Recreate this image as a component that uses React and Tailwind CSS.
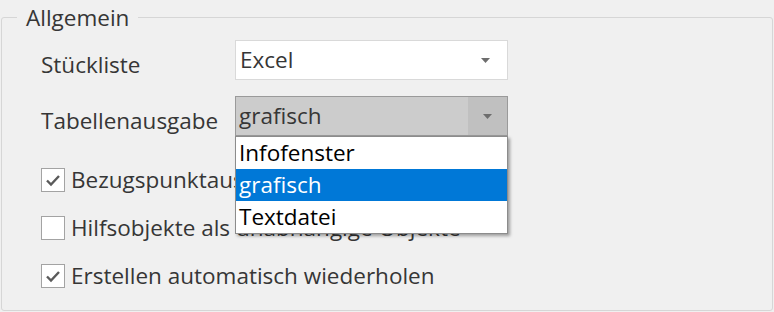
import { useState } from "react";

const font = { fontFamily: '"Open Sans", "Noto Sans", "Liberation Sans", sans-serif' };

function Arrow() {
  return (
    <svg width="9" height="5" viewBox="0 0 9 5" className="shrink-0">
      <path d="M0 0 L9 0 L4.5 5 Z" fill="#6d6d6d" />
    </svg>
  );
}

function CheckBox({ checked, label }) {
  return (
    <div className="h-[48px] flex items-center">
      <div className="w-[24px] h-[24px] bg-white border border-[#a3a3a3] flex items-center justify-center shrink-0">
        {checked && (
          <svg width="16" height="13" viewBox="0 0 16 13">
            <path
              d="M2 6.5 L6 10.5 L14 2"
              fill="none"
              stroke="#5a5a5a"
              strokeWidth="2.4"
            />
          </svg>
        )}
      </div>
      <span className="ml-[6px] whitespace-nowrap">{label}</span>
    </div>
  );
}

export default function App() {
  const [options] = useState(["Infofenster", "grafisch", "Textdatei"]);
  const selected = "grafisch";

  return (
    <div
      className="w-[774px] h-[312px] bg-[#f0f0f0] text-[#363636] text-[22.5px] leading-[28px] overflow-hidden pt-[2px]"
      style={font}
    >
      <fieldset className="ml-[1px] w-[772px] h-[309px] border border-[#d6d6d6] rounded-[3px]">
        <legend className="ml-[15px] px-[9px] leading-[28px] pt-[2px]">Allgemein</legend>

        <div className="pl-[39px] pt-[8px] flex flex-col">
          {/* Stückliste */}
          <div className="h-[40px] flex items-center">
            <span className="w-[194px] pt-[9px]">Stückliste</span>
            <div className="w-[273px] h-[40px] bg-white border border-[#d9d9d9] flex items-center pl-[4px] pr-[17px]">
              <span className="flex-1">Excel</span>
              <Arrow />
            </div>
          </div>

          {/* Tabellenausgabe */}
          <div className="h-[40px] mt-[16px] flex items-center">
            <span className="w-[194px] pt-[9px]">Tabellenausgabe</span>
            <div className="relative w-[273px] h-[40px] bg-[#cccccc] border border-[#9a9a9a] flex items-center">
              <span className="flex-1 pl-[3px]">grafisch</span>
              <div className="w-[39px] h-full bg-[#c0c0c0] flex items-center justify-center">
                <Arrow />
              </div>

              {/* open list */}
              <div className="absolute left-[-1px] top-[39px] w-[273px] bg-white border border-[#8c8c8c] shadow-[2px_2px_3px_rgba(0,0,0,0.35)] z-10 text-black">
                {options.map((o) => (
                  <div
                    key={o}
                    className={
                      o === selected
                        ? "h-[32px] flex items-center pl-[3px] bg-[#0078d7] text-white"
                        : "h-[32px] flex items-center pl-[3px]"
                    }
                  >
                    {o}
                  </div>
                ))}
              </div>
            </div>
          </div>

          {/* checkboxes */}
          <div className="mt-[20px] flex flex-col">
            <CheckBox checked label="Bezugspunktausgabe in Tabelle" />
            <CheckBox label="Hilfsobjekte als unabhängige Objekte" />
            <CheckBox checked label="Erstellen automatisch wiederholen" />
          </div>
        </div>
      </fieldset>
    </div>
  );
}
